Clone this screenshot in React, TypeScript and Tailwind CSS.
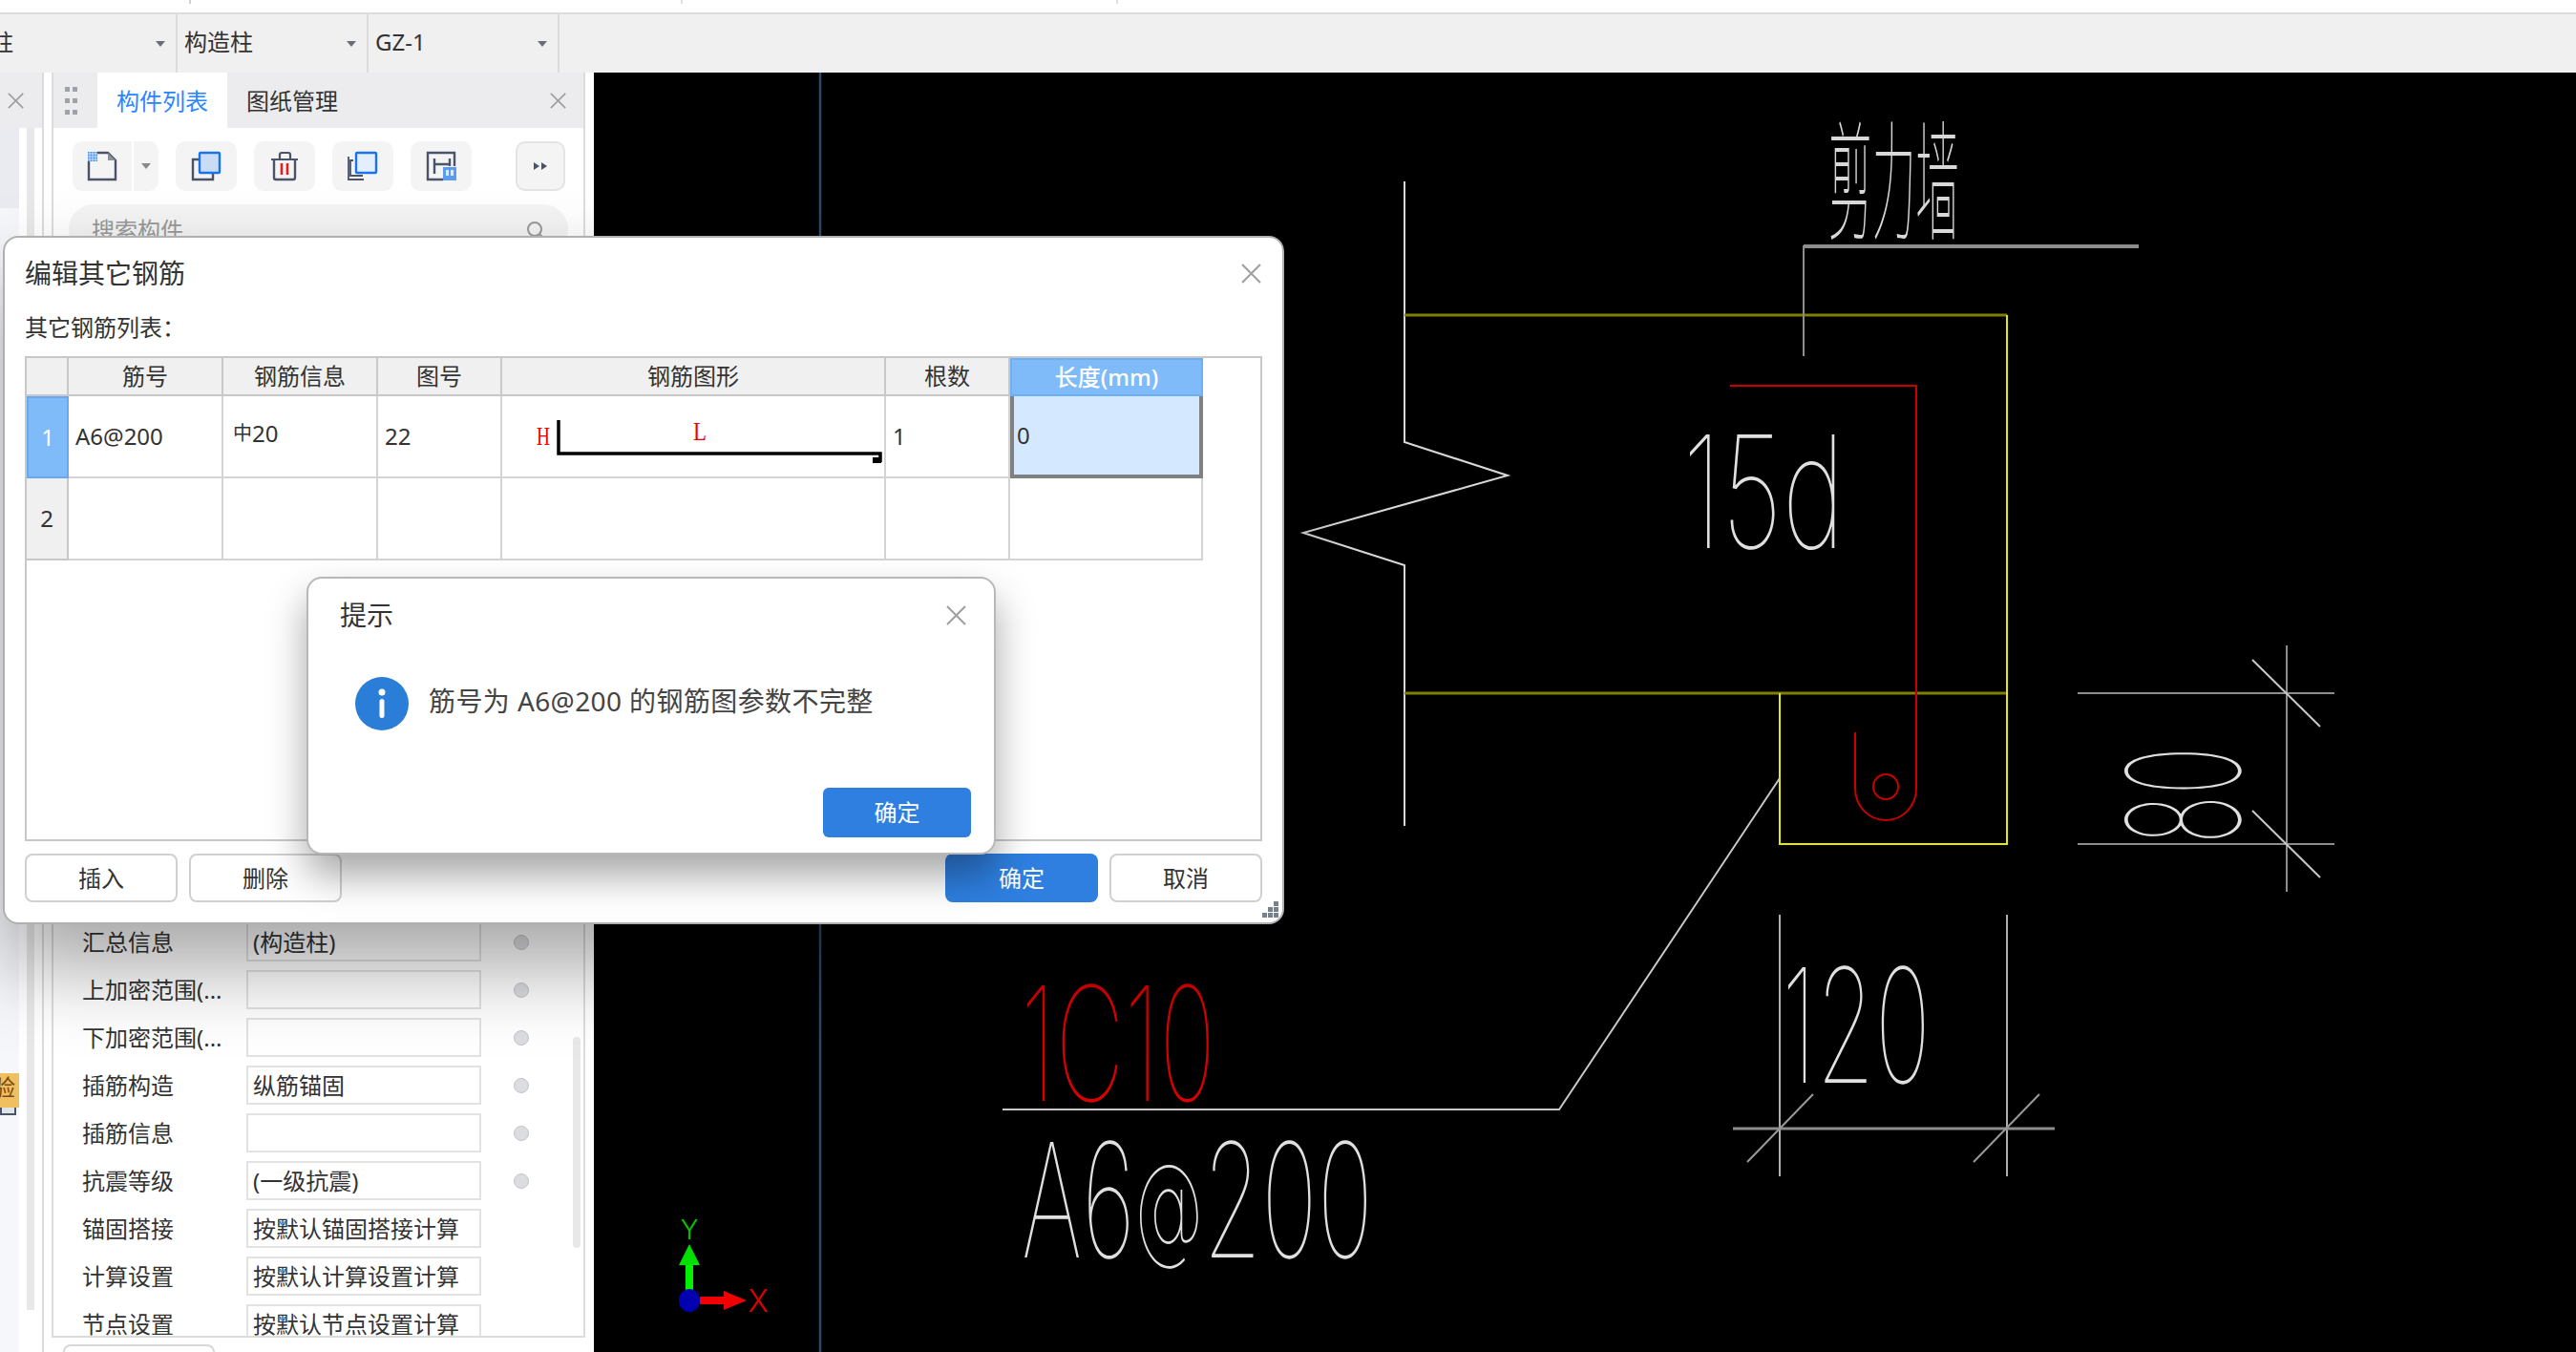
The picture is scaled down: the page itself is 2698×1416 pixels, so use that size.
import { FC, ReactNode } from "react";

const properties = [
  { label: "汇总信息", value: "(构造柱)", dot: true },
  { label: "上加密范围(...", value: "", dot: true },
  { label: "下加密范围(...", value: "", dot: true },
  { label: "插筋构造", value: "纵筋锚固", dot: true },
  { label: "插筋信息", value: "", dot: true },
  { label: "抗震等级", value: "(一级抗震)", dot: true },
  { label: "锚固搭接", value: "按默认锚固搭接计算", dot: false },
  { label: "计算设置", value: "按默认计算设置计算", dot: false },
  { label: "节点设置", value: "按默认节点设置计算", dot: false },
];

const columns = ["", "筋号", "钢筋信息", "图号", "钢筋图形", "根数"];
const gridCols = "grid grid-cols-[44px_162px_162px_130px_402px_130px_202px]";
const headCell =
  "flex items-center justify-center border-r-2 border-b-2 border-[#c8c8c8] bg-[#f0f0f0] text-[24px] text-[#333]";
const cell =
  "flex items-center pl-[7px] border-r-2 border-b-2 border-[#d4d4d4] text-[24px] text-[#333]";

const CloseIcon: FC<{ size: number; className?: string }> = ({ size, className }) => (
  <svg width={size} height={size} viewBox="0 0 20 20" className={className}>
    <path d="M1 1L19 19M19 1L1 19" stroke="#a0a0a0" strokeWidth="2" fill="none" />
  </svg>
);

const Arrow = () => (
  <svg width="12" height="8" viewBox="0 0 12 8" className="absolute right-[10px] top-[27px]">
    <path d="M1 1H11L6 7Z" fill="#6b6f78" />
  </svg>
);

const IconButton: FC<{ children: ReactNode }> = ({ children }) => (
  <div className="flex h-[52px] w-[64px] items-center justify-center rounded-[10px] bg-[#f4f4f4]">
    {children}
  </div>
);

const TopSelect: FC<{ label: string; width: string; offset?: string }> = ({ label, width, offset }) => (
  <div className={`relative flex h-full items-center overflow-hidden border-r-2 border-[#dcdcdc] pb-[3px] ${width}`}>
    <span className={`text-[24px] text-[#333] ${offset ?? "pl-[7px]"}`}>{label}</span>
    <Arrow />
  </div>
);

const FormRow: FC<{ label: string; value: string; dot: boolean }> = ({ label, value, dot }) => (
  <div className="flex h-[41px] shrink-0 items-center">
    <span className="w-[172px] whitespace-nowrap text-[24px] text-[#333]">{label}</span>
    <div className="flex h-[41px] w-[246px] items-center border-2 border-[#e2e2e2] bg-white pl-[5px] text-[24px] text-[#333] whitespace-nowrap">
      {value}
    </div>
    {dot && <span className="ml-[34px] h-4 w-4 rounded-full border border-[#c4c4c8] bg-[#dcdde0]" />}
  </div>
);

const Toolbar = () => (
  <div className="flex items-center pl-[20px] pt-[14px]">
    <div className="flex h-[52px] w-[90px] overflow-hidden rounded-[10px] bg-[#f4f4f4]">
      <div className="flex w-[64px] items-center justify-center border-r-2 border-white">
        <svg width="32" height="32" viewBox="0 0 32 32">
          <path d="M11 2H22L30 10V30H2V11" fill="none" stroke="#4b5368" strokeWidth="2.4" />
          <path d="M22 2V10H30Z" fill="#8a8f9c" />
          <rect x="1" y="1" width="10" height="10" fill="#3d8cf2" />
          <path d="M1 3H11M1 6H11M1 9H11M3 1V11M6 1V11M9 1V11" stroke="#cfe2fb" strokeWidth="1" />
        </svg>
      </div>
      <div className="flex flex-1 items-center justify-center">
        <svg width="12" height="8" viewBox="0 0 12 8">
          <path d="M1 1H11L6 7Z" fill="#8a8a8a" />
        </svg>
      </div>
    </div>
    <div className="ml-[18px] flex items-center gap-[18px]">
      <IconButton>
        <svg width="32" height="32" viewBox="0 0 32 32">
          <path d="M9 9H2V30H23V23" fill="none" stroke="#4b5368" strokeWidth="2.4" />
          <rect x="9" y="2" width="21" height="21" rx="1" fill="#c8dcf5" stroke="#1a73e8" strokeWidth="2.4" />
        </svg>
      </IconButton>
      <IconButton>
        <svg width="32" height="32" viewBox="0 0 32 32">
          <path d="M2 9H30M11 9V4Q11 2 13 2H20Q22 2 22 4V9" fill="none" stroke="#4b5368" strokeWidth="2.2" />
          <path d="M5 9V28Q5 30 7 30H25Q27 30 27 28V9" fill="none" stroke="#4b5368" strokeWidth="2.4" />
          <path d="M13 13V25M19 13V25" stroke="#e02020" strokeWidth="2.6" />
        </svg>
      </IconButton>
      <IconButton>
        <svg width="32" height="32" viewBox="0 0 32 32">
          <path d="M6 10H3V26H16M1 6V30H17" fill="none" stroke="#4b5368" strokeWidth="1.8" />
          <rect x="9" y="2" width="21" height="21" rx="1" fill="#e3efff" stroke="#1a73e8" strokeWidth="2.4" />
        </svg>
      </IconButton>
      <IconButton>
        <svg width="32" height="32" viewBox="0 0 32 32">
          <path d="M18 30H2V2H30V16" fill="none" stroke="#4b5368" strokeWidth="2.4" />
          <path d="M9 8V24M9 14H25M25 8V16" fill="none" stroke="#4b5368" strokeWidth="2.4" />
          <rect x="18" y="17" width="14" height="14" fill="#5b9cf0" />
          <rect x="21" y="20" width="3" height="6" fill="#dbe9fb" />
          <rect x="26" y="20" width="3" height="6" fill="#dbe9fb" />
        </svg>
      </IconButton>
    </div>
    <div className="ml-[46px] flex h-[52px] w-[52px] items-center justify-center rounded-[10px] border-2 border-[#e4e4e4] bg-[#f4f4f4]">
      <svg width="14" height="8" viewBox="0 0 14 8">
        <path d="M0 0L6 4L0 8ZM8 0L14 4L8 8Z" fill="#4b5368" />
      </svg>
    </div>
  </div>
);

const cadFont = "Inter, Roboto, sans-serif";

const CadText: FC<{
  x: number;
  y: number;
  size: number;
  width: number;
  fill?: string;
  font?: string;
  children: ReactNode;
}> = ({ x, y, size, width, fill = "#e0e0e0", font = cadFont, children }) => (
  <text
    x={x}
    y={y}
    fontSize={size}
    fontFamily={font}
    fontWeight={100}
    fill={fill}
    textLength={width}
    lengthAdjust="spacingAndGlyphs"
  >
    {children}
  </text>
);

const Drawing = () => (
  <svg viewBox="622 76 2076 1340" className="h-full w-full">
    <path d="M859 76V1416" stroke="#2c4a6a" strokeWidth="2.5" />

    {/* wall outline */}
    <polyline points="1471,190 1471,463 1579,498 1365,558 1471,592 1471,865" fill="none" stroke="#d8d8d8" strokeWidth="2" />
    <path d="M1471 330H2102M1471 726H2102" stroke="#808000" strokeWidth="3" />
    <path d="M2102 330V884H1864V726" fill="none" stroke="#e8e800" strokeWidth="2" />

    {/* leader */}
    <path d="M1889 373V258H2240" fill="none" stroke="#8c8c8c" strokeWidth="2" />
    <path d="M1889 258H2240" stroke="#8c8c8c" strokeWidth="4" />
    <CadText x={1915} y={241} size={136} width={137} fill="#d8d8d8" font="'Noto Sans CJK SC', sans-serif">
      剪力墙
    </CadText>

    {/* rebar */}
    <path d="M1812 404H2007V826A32 33 0 0 1 1943 826V767" fill="none" stroke="#c80000" strokeWidth="2" />
    <circle cx="1975" cy="824" r="13" fill="none" stroke="#c80000" strokeWidth="2" />
    <CadText x={1762} y={574} size={164} width={170}>
      15d
    </CadText>

    {/* right dimension */}
    <path d="M2176 726H2445M2176 884H2445M2395 676V934" stroke="#8c8c8c" strokeWidth="2" />
    <path d="M2359 691L2430 761M2359 849L2430 919" stroke="#c8c8c8" strokeWidth="2" />
    <g transform="translate(2346 884) rotate(-90)">
      <CadText x={0} y={0} size={164} width={102}>
        80
      </CadText>
    </g>

    {/* bottom dimension */}
    <path d="M1864 958V1232M2102 958V1232" stroke="#e8e8e8" strokeWidth="1.5" />
    <path d="M1815 1182H2152" stroke="#8c8c8c" strokeWidth="3" />
    <path d="M1830 1217L1899 1146M2067 1217L2136 1146" stroke="#999" strokeWidth="2" />
    <CadText x={1866} y={1134} size={166} width={156}>
      120
    </CadText>

    {/* callout */}
    <polyline points="1864,815 1633,1162 1050,1162" fill="none" stroke="#c8c8c8" strokeWidth="2" />
    <CadText x={1069} y={1153} size={166} width={204} fill="#d80000">
      1C10
    </CadText>
    <CadText x={1070} y={1317} size={166} width={368}>
      A6
      <tspan fontSize={122} dy={-12}>
        @
      </tspan>
      <tspan dy={12}>200</tspan>
    </CadText>

    {/* axis */}
    <rect x="718" y="1325" width="8" height="30" fill="#00f000" />
    <path d="M722 1303L733 1325H711Z" fill="#00e000" />
    <rect x="733" y="1358" width="26" height="8" fill="#f00000" />
    <path d="M758 1352L782 1362L758 1372Z" fill="#f00000" />
    <ellipse cx="722" cy="1362" rx="11" ry="12" fill="#0000b0" />
    <text x="722" y="1298" fontSize="28" fontFamily="Inter, sans-serif" fontWeight={300} fill="#00c800" textAnchor="middle">
      Y
    </text>
    <text x="794" y="1374" fontSize="32" fontFamily="Inter, sans-serif" fontWeight={300} fill="#e00000" textAnchor="middle">
      X
    </text>
  </svg>
);

const EditDialog = () => (
  <div className="absolute left-[3px] top-[247px] box-border flex h-[721px] w-[1342px] flex-col rounded-[16px] border-2 border-[#b0b0b0] bg-white pl-[21px] pr-[21px] pt-[17px] shadow-[0_45px_85px_rgba(0,0,0,0.35)]">
    <div className="flex h-[40px] shrink-0 items-center justify-between">
      <span className="text-[28px] text-[#333]">编辑其它钢筋</span>
      <CloseIcon size={21} className="mr-[1px]" />
    </div>
    <div className="mt-[20px] flex h-[34px] shrink-0 items-center text-[24px] text-[#333]">其它钢筋列表：</div>
    <div className="mt-[13px] h-[508px] shrink-0 border-2 border-[#c8c8c8]">
      <div className={`${gridCols} h-[40px]`}>
        {columns.map((c, i) => (
          <div key={i} className={headCell}>
            {c}
          </div>
        ))}
        <div className="flex items-center justify-center border-2 border-[#6fb0f5] bg-[#7fbaf9] text-[24px] font-medium text-white">
          长度(mm)
        </div>
      </div>
      <div className={`${gridCols} h-[86px]`}>
        <div className="flex items-center justify-center border-2 border-[#6aa9ee] bg-[#7fbaf9] text-[24px] text-white">1</div>
        <div className={cell}>A6@200</div>
        <div className={`${cell} pb-[6px] pl-[10px]`}>
          <span className="text-[20px] leading-none">中</span>
          <span>20</span>
        </div>
        <div className={cell}>22</div>
        <div className="relative border-r-2 border-b-2 border-[#d4d4d4]">
          <svg viewBox="0 0 402 86" className="absolute inset-0 h-[86px] w-[402px]">
            <path d="M59 25V60H396V69" fill="none" stroke="#000" strokeWidth="3.5" />
            <rect x="388" y="64" width="9" height="6" fill="#000" />
            <text x="36" y="51" fontSize="28" fontFamily="'Liberation Serif', serif" fill="#f00000" textLength="14" lengthAdjust="spacingAndGlyphs">
              H
            </text>
            <text x="200" y="46" fontSize="28" fontFamily="'Liberation Serif', serif" fill="#f00000" textLength="14" lengthAdjust="spacingAndGlyphs">
              L
            </text>
          </svg>
        </div>
        <div className={cell}>1</div>
        <div className="flex items-center border-x-4 border-b-4 border-[#808080] bg-[#d4e9ff] pl-[3px] text-[24px] text-[#333]">0</div>
      </div>
      <div className={`${gridCols} h-[86px]`}>
        <div className={`${headCell} border-b-2`}>2</div>
        <div className={cell} />
        <div className={cell} />
        <div className={cell} />
        <div className={cell} />
        <div className={cell} />
        <div className={cell} />
      </div>
    </div>
    <div className="mt-[13px] flex h-[51px] shrink-0 items-stretch text-[24px]">
      <button className="w-[160px] rounded-[8px] border-2 border-[#d0d0d0] bg-white text-[#333]">插入</button>
      <button className="ml-[12px] w-[160px] rounded-[8px] border-2 border-[#d0d0d0] bg-white text-[#333]">删除</button>
      <button className="ml-auto w-[160px] rounded-[8px] bg-[#2e7fe0] text-white">确定</button>
      <button className="ml-[12px] w-[160px] rounded-[8px] border-2 border-[#d0d0d0] bg-white text-[#333]">取消</button>
    </div>
    <svg width="18" height="18" viewBox="0 0 18 18" className="absolute bottom-[4px] right-[3px]">
      <path d="M12 0H17V5H12ZM6 6H11V11H6ZM12 6H17V11H12ZM0 12H5V17H0ZM6 12H11V17H6ZM12 12H17V17H12Z" fill="#7a808a" />
    </svg>
  </div>
);

const MessageDialog = () => (
  <div className="absolute left-[321px] top-[604px] box-border flex h-[291px] w-[722px] flex-col rounded-[16px] border-2 border-[#b8b8b8] bg-white pl-[33px] pr-[22px] pt-[19px] shadow-[0_22px_40px_rgba(0,0,0,0.35)]">
    <div className="flex h-[38px] shrink-0 items-center justify-between">
      <span className="text-[28px] text-[#333]">提示</span>
      <CloseIcon size={21} className="mr-[7px]" />
    </div>
    <div className="mt-[46px] flex h-[56px] shrink-0 items-center pl-[16px]">
      <svg width="56" height="56" viewBox="0 0 56 56">
        <circle cx="28" cy="28" r="28" fill="#2a7ed8" />
        <circle cx="28" cy="16" r="3.5" fill="#fff" />
        <rect x="25.5" y="23" width="5" height="20" rx="2.5" fill="#fff" />
      </svg>
      <span className="ml-[21px] whitespace-pre pb-[6px] text-[28px] tracking-[0.4px] text-[#444]">筋号为 A6@200 的钢筋图参数不完整</span>
    </div>
    <div className="mt-[60px] flex justify-end pr-[2px]">
      <button className="h-[52px] w-[155px] rounded-[6px] bg-[#2e7fe0] text-[24px] text-white">确定</button>
    </div>
  </div>
);

export default function App() {
  return (
    <div className="relative h-[1416px] w-[2698px] overflow-hidden bg-white [font-family:'Noto_Sans','Noto_Sans_CJK_SC',sans-serif]">
      <div className="flex h-[13px]">
        <div className="h-[4px] w-[200px] border-r-2 border-[#d0d0d0]" />
        <div className="h-[4px] w-[515px] border-r-2 border-[#e0e0e0]" />
        <div className="h-[4px] w-[456px] border-r-2 border-[#e0e0e0]" />
      </div>
      <div className="flex h-[63px] border-t-2 border-[#dcdcdc] bg-[#f0f0f0]">
        <TopSelect label="柱" width="w-[186px]" offset="-ml-[10px]" />
        <TopSelect label="构造柱" width="w-[200px]" />
        <TopSelect label="GZ-1" width="w-[200px]" />
      </div>

      <div className="flex h-[1340px]">
        {/* left sliver panel */}
        <div className="relative flex w-[46px] shrink-0 flex-col border-r-2 border-[#dcdcdc]">
          <div className="flex h-[58px] items-center justify-center bg-[#ececee] pr-[12px]">
            <CloseIcon size={17} />
          </div>
          <div className="flex w-[20px] flex-1 flex-col bg-[#f5f7fb]">
            <div className="h-[84px] bg-[#e9ebf0]" />
            <div className="relative mt-[906px] h-[36px] overflow-hidden bg-[#f0c060]">
              <span className="absolute -left-[8px] top-0 text-[24px] leading-[30px] text-[#7a4a10]">验</span>
            </div>
            <div className="-mt-[7px] ml-0 h-[15px] w-[17px] border-2 border-[#4b5365] bg-[#dfe3ea]" />
          </div>
          <div className="absolute bottom-[44px] left-[28px] top-[58px] w-[8px] bg-[#e8e8e8]" />
        </div>

        {/* component list */}
        <div className="ml-[8px] flex w-[559px] shrink-0 flex-col">
          <div className="flex h-[1325px] flex-col border-x-2 border-b-2 border-[#dcdcdc]">
            <div className="flex h-[58px] shrink-0 items-stretch bg-[#ececee]">
              <div className="flex w-[46px] items-center justify-center pr-[8px]">
                <svg width="14" height="30" viewBox="0 0 14 30">
                  <path d="M0 1H5V6H0ZM8 1H13V6H8ZM0 13H5V18H0ZM8 13H13V18H8ZM0 25H5V30H0ZM8 25H13V30H8Z" fill="#9ea2aa" />
                </svg>
              </div>
              <div className="flex w-[136px] items-center justify-center bg-white pt-[2px] text-[24px] text-[#2a86ff]">构件列表</div>
              <div className="ml-[20px] flex items-center pt-[2px] text-[24px] text-[#333]">图纸管理</div>
              <div className="ml-auto flex items-center pr-[18px]">
                <CloseIcon size={17} />
              </div>
            </div>
            <Toolbar />
            <div className="mx-[16px] mt-[14px] flex h-[52px] shrink-0 items-center justify-between rounded-[26px] bg-[#f4f4f4] pl-[24px] pr-[24px] pt-[2px]">
              <span className="text-[24px] text-[#999]">搜索构件...</span>
              <svg width="20" height="20" viewBox="0 0 20 20">
                <circle cx="9" cy="9" r="7" fill="none" stroke="#999" strokeWidth="2" />
                <path d="M14 14L19 19" stroke="#999" strokeWidth="2" />
              </svg>
            </div>
            <div className="relative min-h-0 flex-1 overflow-hidden pl-[30px] pt-[700px]">
              <div className="flex flex-col gap-[9px]">
                {properties.map((p) => (
                  <FormRow key={p.label} {...p} />
                ))}
              </div>
              <div className="absolute left-[544px] top-[820px] h-[221px] w-[8px] rounded bg-[#e8e8e8]" />
            </div>
          </div>
          <div className="ml-[12px] mt-[7px] h-[10px] w-[159px] rounded-t-[8px] border-x-2 border-t-2 border-[#d8d8d8]" />
        </div>

        <div className="ml-[9px] min-w-0 flex-1 bg-black">
          <Drawing />
        </div>
      </div>

      <EditDialog />
      <MessageDialog />
    </div>
  );
}
